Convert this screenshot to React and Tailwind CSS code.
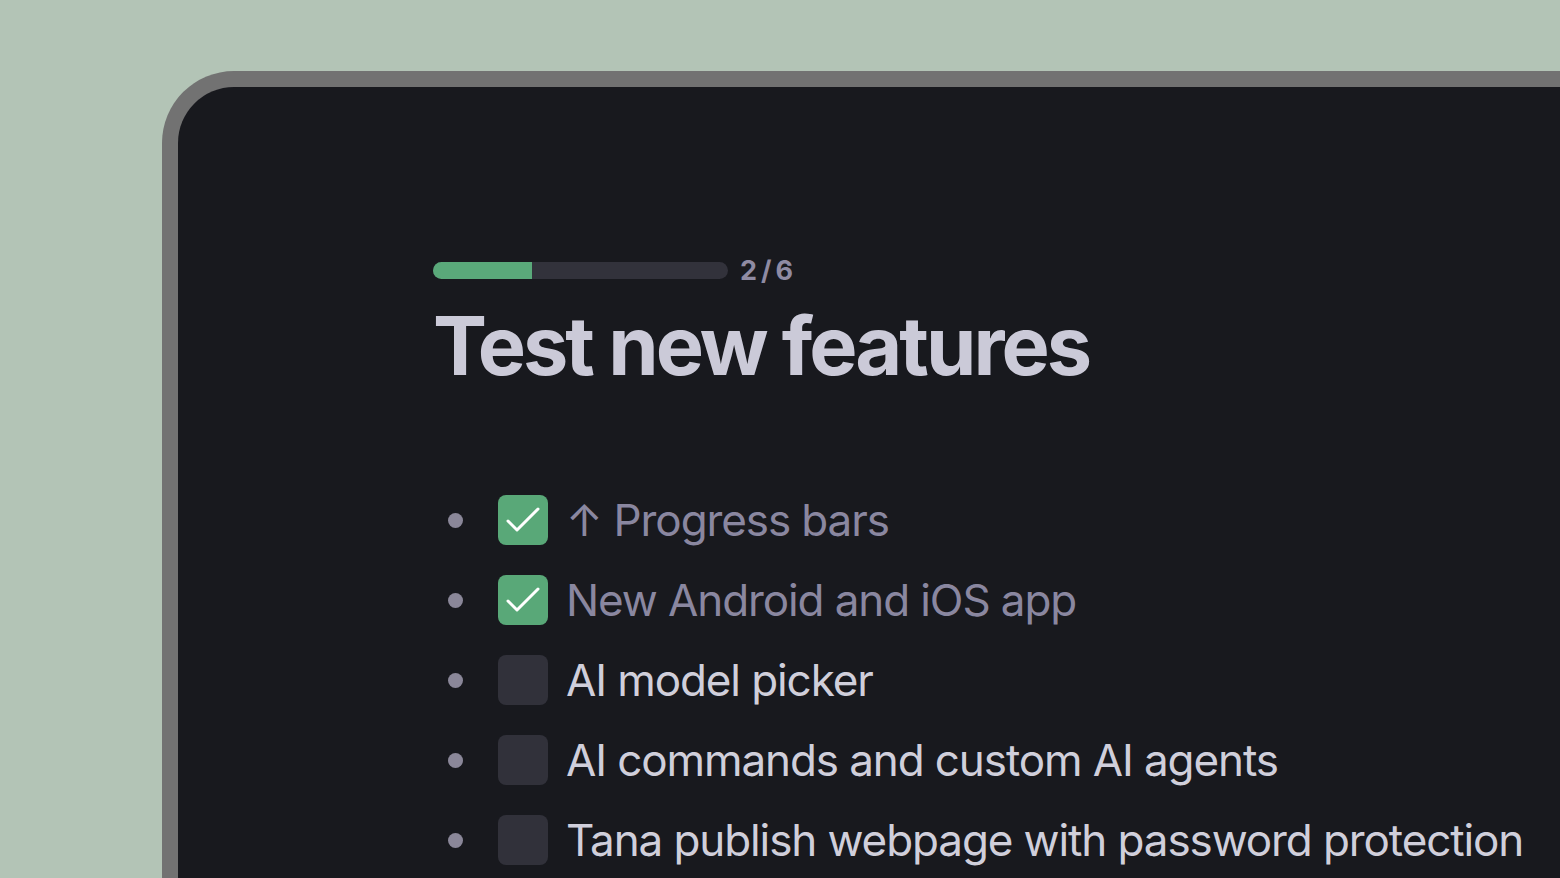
const TOTAL_TASKS = 6;

const items = [
  { label: "Progress bars", done: true, arrow: true },
  { label: "New Android and iOS app", done: true },
  { label: "AI model picker", done: false },
  { label: "AI commands and custom AI agents", done: false },
  { label: "Tana publish webpage with password protection", done: false },
];

function Check() {
  return (
    <svg width="50" height="50" viewBox="0 0 50 50" fill="none">
      <path
        d="M10 26 L19 35 L40 14"
        stroke="#ffffff"
        strokeWidth="3"
        strokeLinecap="round"
        strokeLinejoin="round"
      />
    </svg>
  );
}

export default function App() {
  const doneCount = items.filter((item) => item.done).length;

  return (
    <div
      className="h-[878px] w-full overflow-hidden bg-[#b3c4b6] pl-[162px] pt-[71px]"
      style={{ fontFamily: "Inter, 'Noto Sans', sans-serif" }}
    >
      <div className="h-full rounded-tl-[72px] bg-[#727272] pl-4 pt-4">
        <div className="h-full rounded-tl-[56px] bg-[#18191e] pl-[255px] pt-[170px]">
          <div className="flex items-center gap-3">
            <div className="h-[17px] w-[295px] shrink-0 overflow-hidden rounded-full bg-[#32323b]">
              <div className="h-full w-[99px] bg-[#5aa97a]" />
            </div>
            <span className="text-[27px] font-bold leading-none tracking-[4px] text-[#8f8ba3]">
              {doneCount}/{TOTAL_TASKS}
            </span>
          </div>

          <h1 className="mt-[22px] whitespace-nowrap text-[81px] font-bold leading-none tracking-[-3px] text-[#cbcad8]">
            Test new features
          </h1>

          <ul className="mt-[93px] flex flex-col">
            {items.map((item) => (
              <li key={item.label} className="flex h-[80px] items-center">
                <span className="ml-[15px] h-[15px] w-[15px] shrink-0 rounded-full bg-[#8a8799]" />
                <span
                  className={
                    item.done
                      ? "ml-[35px] h-[50px] w-[50px] shrink-0 rounded-[8px] bg-[#59a878]"
                      : "ml-[35px] h-[50px] w-[50px] shrink-0 rounded-[8px] bg-[#31313a]"
                  }
                >
                  {item.done && <Check />}
                </span>
                <span
                  className={
                    item.done
                      ? "ml-[18px] whitespace-nowrap text-[44px] leading-none tracking-[-1.1px] text-[#8a87a0]"
                      : "ml-[18px] whitespace-nowrap text-[44px] leading-none tracking-[-1.1px] text-[#d0cfdb]"
                  }
                >
                  {item.arrow && <span className="mr-[12px]">↑</span>}
                  {item.label}
                </span>
              </li>
            ))}
          </ul>
        </div>
      </div>
    </div>
  );
}
